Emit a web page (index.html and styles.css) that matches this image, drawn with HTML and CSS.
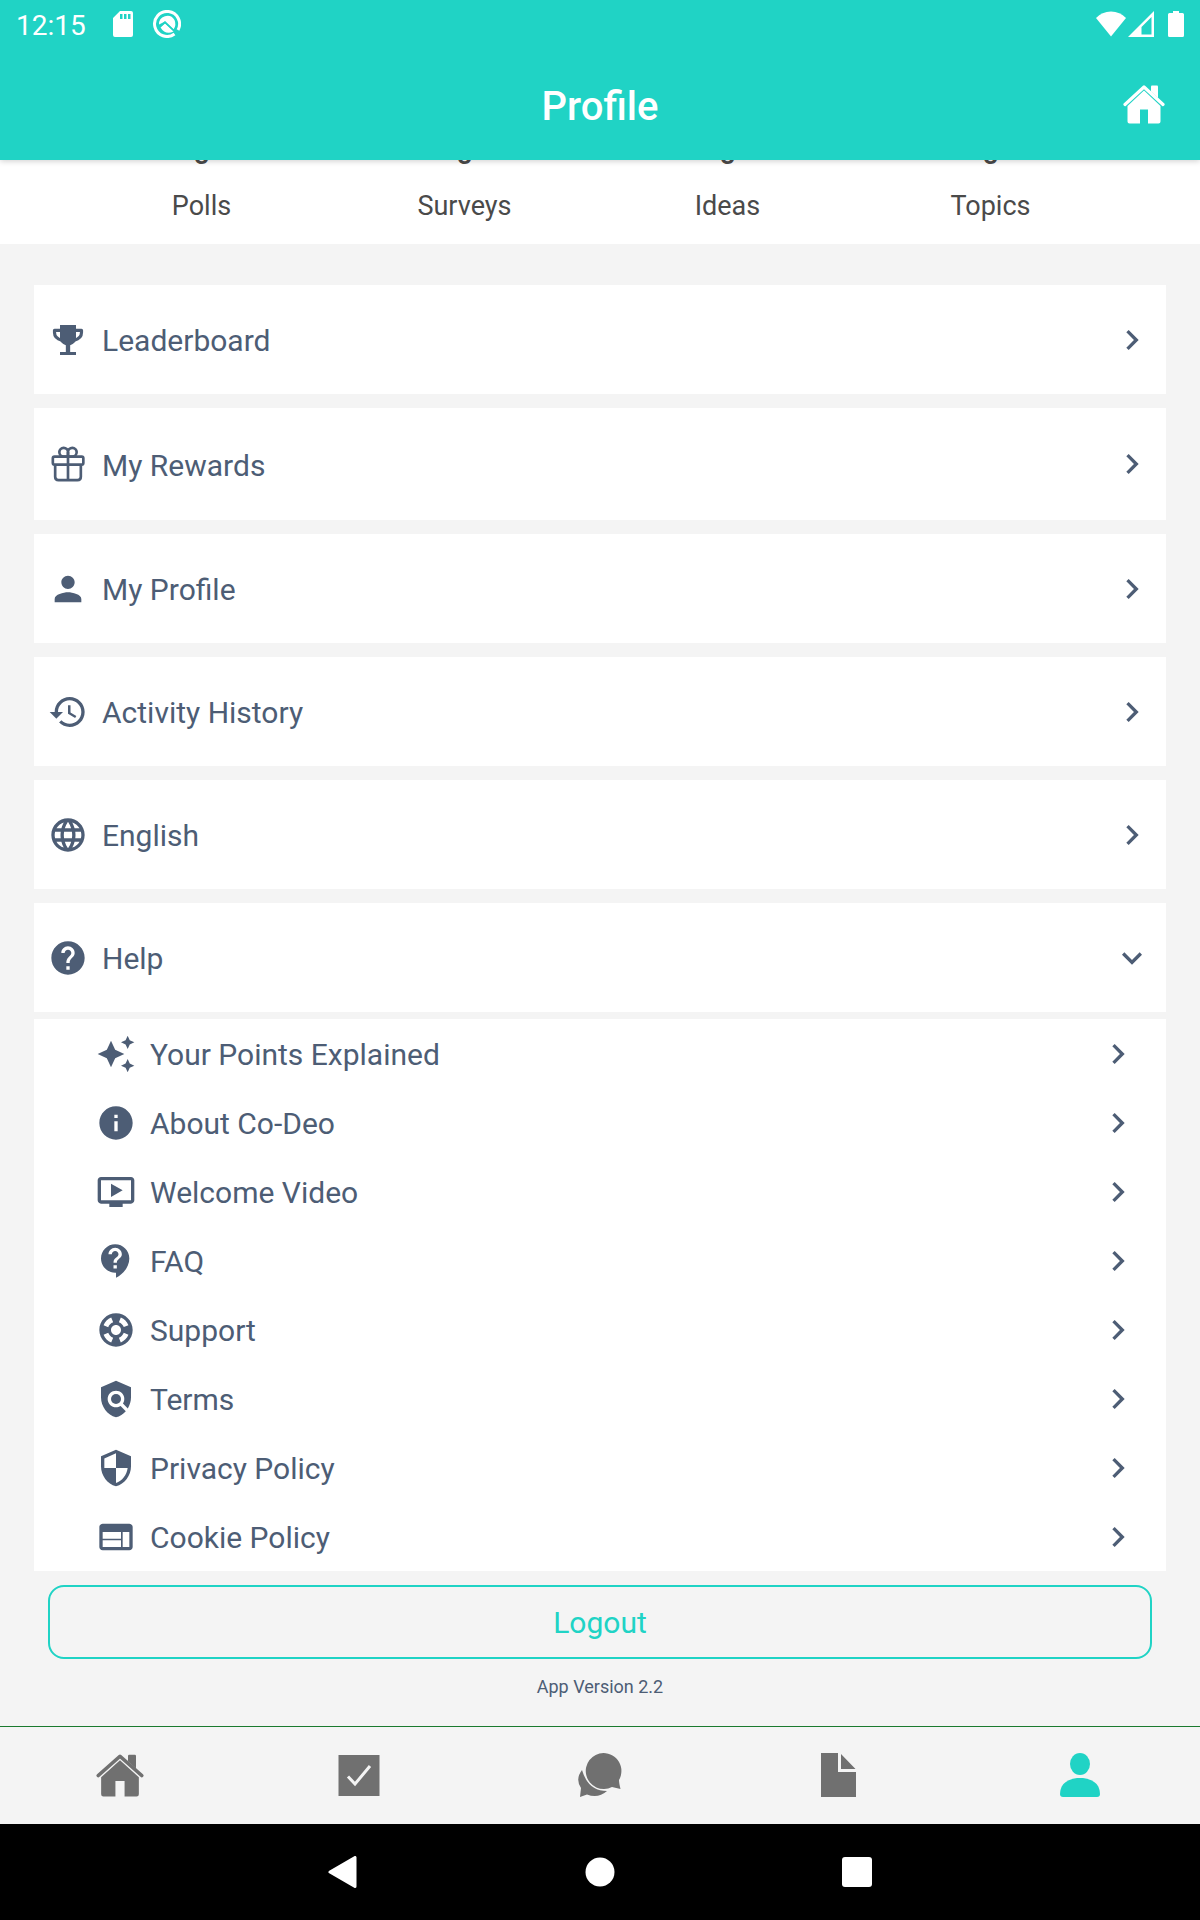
FILE: index.html
```html
<!DOCTYPE html>
<html lang="en">
<head>
    <meta charset="utf-8">
    <meta name="viewport" content="width=device-width, initial-scale=1.0">
    <title>Profile</title>
    <link rel="stylesheet" href="styles.css">
</head>
<body>
    <!-- shared shapes -->
    <svg class="sprite" aria-hidden="true">
        <symbol id="chevron" viewBox="0 0 24 24"><path d="M10 6L8.590 7.410 13.170 12l-4.580 4.590L10 18l6-6z"/></symbol>
        <symbol id="house" viewBox="0 0 42 40">
            <path d="M2 20.500L21 3l19 17.500" fill="none" stroke="currentColor" stroke-width="3.200" stroke-linecap="round" stroke-linejoin="round"/>
            <path d="M28 2.500q0-1 1-1h5q1 0 1 1V14l-7-6.500z"/>
            <path d="M21 6.500L37.500 22v15.500q0 2-2 2H25V25.500h-8v14H6.500q-2 0-2-2V22z"/>
        </symbol>
    </svg>

    <div class="status-bar">
        <span class="time">12:15</span>
        <svg class="sd" viewBox="0 0 20 26"><path fill-rule="evenodd" d="M7 0h11q2 0 2 2v22q0 2-2 2H2q-2 0-2-2V7zM7 3v5h2.500V3zm4 0v5h2.500V3zm4 0v5h2.500V3z"/></svg>
        <svg class="app" viewBox="0 0 28 28">
            <path d="M21.500 24A12.500 12.500 0 1 1 25 20" fill="none" stroke="#fff" stroke-width="3"/>
            <path d="M6 14.500A8.300 8.300 0 0 1 21.500 10q2.200 5-1 9.500L12 11.500z"/>
            <path d="M7.500 17.500L12 13.500l8.500 8q-8 4-13-4z"/>
            <path d="M6.500 17L12 12.200l10 9.300" fill="none" stroke="#20d3c5" stroke-width="1.600"/>
        </svg>
        <div class="signals">
            <svg class="wifi" viewBox="0 0 30 26"><path d="M0 7Q6 .500 15 .500T30 7L15 25.500z"/></svg>
            <svg class="cell" viewBox="0 0 26 26"><path fill-rule="evenodd" d="M26 0v26H0zM23.500 6L13.500 16v7.500h10z"/></svg>
            <svg class="battery" viewBox="0 0 16 26"><path d="M5 0h6v2h3.500Q16 2 16 3.500v21q0 1.500-1.500 1.500h-13Q0 26 0 24.500v-21Q0 2 1.500 2H5z"/></svg>
        </div>
    </div>

    <header>
        <h1>Profile</h1>
        <a class="home-link" href="#" aria-label="Home"><svg viewBox="0 0 42 40"><use href="#house"/></svg></a>
    </header>

    <section class="stats">
        <div class="stat"><b>0</b><span>Polls</span></div>
        <div class="stat"><b>0</b><span>Surveys</span></div>
        <div class="stat"><b>0</b><span>Ideas</span></div>
        <div class="stat"><b>0</b><span>Topics</span></div>
    </section>

    <main>
        <nav class="menu">
            <a class="item" href="#">
                <svg viewBox="0 0 24 24">
                    <path d="M7.200 3h9.600v8q0 3-3.500 4.200v4h3.500V21H7.200v-1.800h3.500v-4Q7.200 14 7.200 11z"/>
                    <path d="M7.500 6.200H3.900v1.300q0 3.500 4.300 4.600M16.500 6.200h3.600v1.300q0 3.500-4.300 4.600" fill="none" stroke="currentColor" stroke-width="1.900" stroke-linejoin="round"/>
                </svg>
                <span>Leaderboard</span>
                <svg class="arrow"><use href="#chevron"/></svg>
            </a>
            <a class="item rewards" href="#">
                <svg viewBox="0 0 24 24">
                    <g fill="none" stroke="currentColor" stroke-width="1.600">
                        <rect x="2.900" y="7.600" width="18.300" height="4.800" rx="1"/>
                        <path d="M4.300 12.400v7.300q0 2 2 2h11.400q2 0 2-2v-7.300M12 4.800v17"/>
                        <path d="M12 7.500H9.300A2.600 2.600 0 1 1 12 4.800zM12 7.500h2.700A2.600 2.600 0 1 0 12 4.800z"/>
                    </g>
                </svg>
                <span>My Rewards</span>
                <svg class="arrow"><use href="#chevron"/></svg>
            </a>
            <a class="item" href="#">
                <svg viewBox="0 0 24 24"><path d="M12 12c2.210 0 4-1.790 4-4s-1.790-4-4-4-4 1.790-4 4 1.790 4 4 4zm0 2c-2.670 0-8 1.340-8 4v2h16v-2c0-2.660-5.330-4-8-4z"/></svg>
                <span>My Profile</span>
                <svg class="arrow"><use href="#chevron"/></svg>
            </a>
            <a class="item" href="#">
                <svg viewBox="0 0 24 24"><path d="M13 3c-4.970 0-9 4.030-9 9H1l3.890 3.890.07.14L9 12H6c0-3.870 3.130-7 7-7s7 3.130 7 7-3.130 7-7 7c-1.930 0-3.680-.79-4.940-2.060l-1.420 1.420C8.270 19.990 10.510 21 13 21c4.970 0 9-4.030 9-9s-4.030-9-9-9zm-1 5v5l4.280 2.540.72-1.210-3.500-2.080V8H12z"/></svg>
                <span>Activity History</span>
                <svg class="arrow"><use href="#chevron"/></svg>
            </a>
            <a class="item" href="#">
                <svg viewBox="0 0 24 24"><path d="M11.990 2C6.470 2 2 6.480 2 12s4.470 10 9.990 10C17.520 22 22 17.520 22 12S17.520 2 11.990 2zm6.930 6h-2.950c-.32-1.250-.78-2.450-1.380-3.560 1.840.63 3.370 1.910 4.330 3.560zM12 4.040c.83 1.200 1.480 2.530 1.910 3.960h-3.820c.43-1.430 1.080-2.760 1.910-3.960zM4.260 14C4.100 13.360 4 12.690 4 12s.1-1.360.26-2h3.380c-.08.66-.14 1.320-.14 2 0 .68.06 1.340.14 2H4.260zm.82 2h2.950c.32 1.250.78 2.450 1.380 3.560-1.840-.63-3.370-1.900-4.330-3.560zm2.950-8H5.080c.96-1.660 2.490-2.930 4.330-3.560C8.810 5.550 8.350 6.750 8.030 8zM12 19.960c-.83-1.200-1.480-2.530-1.910-3.960h3.820c-.43 1.430-1.080 2.760-1.910 3.960zM14.340 14H9.660c-.09-.66-.16-1.320-.16-2 0-.68.07-1.350.16-2h4.680c.09.65.16 1.320.16 2 0 .68-.07 1.340-.16 2zm.25 5.560c.6-1.110 1.060-2.310 1.380-3.560h2.950c-.96 1.650-2.490 2.930-4.330 3.560zM16.360 14c.08-.66.14-1.320.14-2 0-.68-.06-1.340-.14-2h3.380c.16.64.26 1.310.26 2s-.1 1.360-.26 2h-3.380z"/></svg>
                <span>English</span>
                <svg class="arrow"><use href="#chevron"/></svg>
            </a>
            <button class="item" id="helpToggle" type="button" aria-expanded="true" aria-controls="helpMenu">
                <svg viewBox="0 0 24 24"><path d="M12 2C6.480 2 2 6.480 2 12s4.480 10 10 10 10-4.480 10-10S17.520 2 12 2zm1 17h-2v-2h2v2zm2.070-7.750l-.9.920C13.450 12.900 13 13.500 13 15h-2v-.5c0-1.100.45-2.100 1.170-2.830l1.240-1.260c.37-.36.59-.86.59-1.410 0-1.100-.9-2-2-2s-2 .9-2 2H8c0-2.210 1.790-4 4-4s4 1.790 4 4c0 .88-.36 1.680-.93 2.250z"/></svg>
                <span>Help</span>
                <svg class="arrow down"><use href="#chevron"/></svg>
            </button>
        </nav>

        <nav class="submenu" id="helpMenu">
            <a class="sub-item" href="#">
                <svg viewBox="0 0 24 24"><path d="M19 9l1.250-2.750L23 5l-2.750-1.250L19 1l-1.250 2.750L15 5l2.750 1.250L19 9zm-7.500.5L9 4 6.500 9.500 1 12l5.500 2.500L9 20l2.500-5.500L17 12l-5.500-2.500zM19 15l-1.250 2.750L15 19l2.750 1.250L19 23l1.250-2.750L23 19l-2.750-1.250L19 15z"/></svg>
                <span>Your Points Explained</span>
                <svg class="arrow"><use href="#chevron"/></svg>
            </a>
            <a class="sub-item" href="#">
                <svg viewBox="0 0 24 24"><path d="M12 2C6.480 2 2 6.480 2 12s4.480 10 10 10 10-4.480 10-10S17.520 2 12 2zm1 15h-2v-6h2v6zm0-8h-2V7h2v2z"/></svg>
                <span>About Co-Deo</span>
                <svg class="arrow"><use href="#chevron"/></svg>
            </a>
            <a class="sub-item" href="#">
                <svg viewBox="0 0 24 24"><path d="M21 3H3c-1.110 0-2 .89-2 2v12c0 1.100.89 2 2 2h5v2h8v-2h5c1.100 0 1.990-.9 1.990-2L23 5c0-1.110-.9-2-2-2zm0 14H3V5h18v12zm-5-6l-7 4V7z"/></svg>
                <span>Welcome Video</span>
                <svg class="arrow"><use href="#chevron"/></svg>
            </a>
            <a class="sub-item" href="#">
                <svg viewBox="0 0 24 24"><path d="M11.500 2C6.810 2 3 5.810 3 10.500S6.810 19 11.500 19h.5v3c4.860-2.340 8-7 8-11.500C20 5.810 16.190 2 11.500 2zm1 14.500h-2v-2h2v2zm0-3.500h-2c0-3.250 3-3 3-5 0-1.100-.9-2-2-2s-2 .9-2 2h-2c0-2.210 1.790-4 4-4s4 1.790 4 4c0 2.500-3 2.750-3 5z"/></svg>
                <span>FAQ</span>
                <svg class="arrow"><use href="#chevron"/></svg>
            </a>
            <a class="sub-item" href="#">
                <svg viewBox="0 0 24 24"><path d="M12 2C6.480 2 2 6.480 2 12c0 5.520 4.480 10 10 10s10-4.480 10-10c0-5.520-4.480-10-10-10zm7.460 7.120l-2.780 1.150c-.51-1.360-1.580-2.440-2.950-2.940l1.150-2.780c2.100.8 3.770 2.470 4.580 4.570zM12 15c-1.660 0-3-1.340-3-3s1.340-3 3-3 3 1.340 3 3-1.340 3-3 3zM9.130 4.540l1.170 2.780c-1.380.5-2.470 1.590-2.980 2.970L4.540 9.130c.81-2.110 2.480-3.780 4.590-4.590zM4.540 14.870l2.780-1.150c.51 1.380 1.590 2.460 2.970 2.960l-1.170 2.780c-2.100-.81-3.770-2.480-4.580-4.590zm10.340 4.590l-1.150-2.780c1.370-.51 2.450-1.590 2.950-2.970l2.780 1.170c-.81 2.100-2.480 3.770-4.580 4.580z"/></svg>
                <span>Support</span>
                <svg class="arrow"><use href="#chevron"/></svg>
            </a>
            <a class="sub-item" href="#">
                <svg viewBox="0 0 24 24"><path d="M21 5l-9-4-9 4v6c0 5.550 3.840 10.740 9 12 2.300-.56 4.330-1.900 5.880-3.710l-3.120-3.120c-1.940 1.290-4.580 1.070-6.290-.64-1.950-1.950-1.950-5.120 0-7.070 1.950-1.950 5.120-1.950 7.070 0 1.710 1.710 1.920 4.350.64 6.290l2.900 2.900C20.290 15.690 21 13.380 21 11V5z"/><circle cx="12" cy="12" r="3"/></svg>
                <span>Terms</span>
                <svg class="arrow"><use href="#chevron"/></svg>
            </a>
            <a class="sub-item" href="#">
                <svg viewBox="0 0 24 24"><path d="M12 1L3 5v6c0 5.550 3.840 10.740 9 12 5.160-1.260 9-6.450 9-12V5l-9-4zm0 10.990h7c-.53 4.120-3.280 7.790-7 8.940V12H5V6.300l7-3.110v8.800z"/></svg>
                <span>Privacy Policy</span>
                <svg class="arrow"><use href="#chevron"/></svg>
            </a>
            <a class="sub-item" href="#">
                <svg viewBox="0 0 24 24"><path d="M20 4H4c-1.100 0-1.990.9-1.990 2L2 18c0 1.100.9 2 2 2h16c1.100 0 2-.9 2-2V6c0-1.100-.9-2-2-2zm-5 14H4v-4h11v4zm0-5H4V9h11v4zm5 5h-4V9h4v9z"/></svg>
                <span>Cookie Policy</span>
                <svg class="arrow"><use href="#chevron"/></svg>
            </a>
        </nav>

        <button class="logout" type="button">Logout</button>
        <p class="version">App Version 2.2</p>
    </main>

    <footer>
        <nav class="tabs">
            <a href="#" aria-label="Home"><svg viewBox="0 0 42 40" preserveAspectRatio="none"><use href="#house"/></svg></a>
            <a href="#" aria-label="Surveys"><svg viewBox="0 0 48 44"><path d="M2.500 2h41v41h-41z"/><path d="M12 23.500l7 7.500 15-18" fill="none" stroke="#f4f4f4" stroke-width="3"/></svg></a>
            <a href="#" aria-label="Chat"><svg viewBox="0 0 48 44">
                <path d="M6 17Q-1 26 5 35L4 44l7-2.500Q22 46 31 38 12 38 6 17z"/>
                <path d="M27.500 0a18 18 0 0 1 15.500 27q0 3 1.500 9l-8.500-2A18 18 0 1 1 27.500 0z"/>
            </svg></a>
            <a href="#" aria-label="Documents"><svg viewBox="0 0 48 44"><path d="M5 0h17v19h18v25H5zM25 1l14.500 15H25z"/></svg></a>
            <a class="active" href="#" aria-label="Profile"><svg viewBox="0 0 48 44"><ellipse cx="24" cy="11" rx="10" ry="11"/><path d="M4 41C4 30 13 25 24 25s20 5 20 16q0 3-3 3H7q-3 0-3-3z"/></svg></a>
        </nav>
        <div class="system-nav">
            <button type="button" aria-label="Back"><svg viewBox="0 0 32 32"><path d="M28 1.500v29L3 16z" stroke="#fff" stroke-width="3" stroke-linejoin="round"/></svg></button>
            <button type="button" aria-label="Home"><svg viewBox="0 0 32 32"><circle cx="16" cy="16" r="14.500"/></svg></button>
            <button type="button" aria-label="Recent apps"><svg viewBox="0 0 32 32"><rect x="1" y="1" width="30" height="30" rx="3"/></svg></button>
        </div>
    </footer>

    <script>
        const helpToggle = document.getElementById('helpToggle');
        const helpMenu = document.getElementById('helpMenu');

        helpToggle.addEventListener('click', () => {
            helpMenu.hidden = !helpMenu.hidden;
            helpToggle.setAttribute('aria-expanded', String(!helpMenu.hidden));
        });
    </script>
</body>
</html>
```
FILE: styles.css
```css
*{
    box-sizing: border-box;
}
body{
    margin: 0;
    min-height: 100vh;
    display: flex;
    flex-direction: column;
    background-color: #f4f4f4;
    color: #4d5d75;
    font-family: Roboto, "Open Sans", sans-serif;
}
a{
    color: inherit;
    text-decoration: none;
}
button{
    border: none;
    background: none;
    font-family: inherit;
    cursor: pointer;
}
svg{
    display: block;
    fill: currentColor;
}
.sprite{
    display: none;
}

/* top bars */
.status-bar{
    position: relative;
    z-index: 2;
    height: 48px;
    padding: 0 16px;
    display: flex;
    align-items: center;
    background-color: #20d3c5;
    color: white;
}
.time{
    width: 97px;
    padding-top: 2px;
    font-size: 28px;
}
.sd{
    width: 20px;
    height: 26px;
}
.app{
    width: 28px;
    height: 28px;
    margin-left: 20px;
}
.signals{
    display: flex;
    margin-left: auto;
}
.wifi{
    width: 30px;
    height: 26px;
}
.cell{
    width: 26px;
    height: 26px;
    margin-left: 2px;
}
.battery{
    width: 16px;
    height: 26px;
    margin-left: 14px;
}
header{
    position: relative;
    z-index: 1;
    height: 112px;
    padding-top: 4px;
    display: flex;
    align-items: center;
    justify-content: center;
    background-color: #20d3c5;
    color: white;
    box-shadow: 0 1px 6px rgba(0, 0, 0, 0.2);
}
h1{
    margin: 0;
    font-size: 40px;
    font-weight: 500;
}
.home-link{
    position: absolute;
    right: 35px;
    top: 36px;
}
.home-link svg{
    width: 42px;
    height: 40px;
}

/* counters, the numbers are scrolled under the header */
.stats{
    height: 84px;
    padding: 0 78px 22px 70px;
    display: flex;
    align-items: flex-end;
    overflow: hidden;
    background-color: white;
    color: #4a4a4a;
}
.stat{
    flex: 1;
    display: flex;
    flex-direction: column;
    align-items: center;
    gap: 20px;
    font-size: 27px;
    line-height: 32px;
}
.stat b{
    font-size: 30px;
    font-weight: 500;
}

/* menu */
main{
    flex: 1;
    padding: 41px 34px 0;
}
.menu{
    display: flex;
    flex-direction: column;
    gap: 14px;
}
.item,
.sub-item{
    width: 100%;
    display: flex;
    align-items: center;
    gap: 14px;
    background-color: white;
    color: #4d5d75;
    font-size: 30px;
    line-height: 35px;
    text-align: left;
}
.item{
    min-height: 109px;
    padding: 0 14px;
}
.rewards{
    min-height: 112px;
}
.item span,
.sub-item span{
    padding-top: 2px;
}
.item svg,
.sub-item svg{
    width: 40px;
    height: 40px;
    flex-shrink: 0;
}
.item .arrow,
.sub-item .arrow{
    margin-left: auto;
}
.down{
    transform: rotate(90deg);
}
.submenu{
    margin-top: 7px;
}
.sub-item{
    height: 69px;
    padding: 0 28px 0 62px;
}
.logout{
    display: block;
    width: calc(100% - 28px);
    height: 74px;
    margin: 14px auto 0;
    padding-top: 2px;
    border: 2px solid #20d3c5;
    border-radius: 16px;
    color: #20d3c5;
    font-size: 30px;
}
.version{
    margin: 17px 0 28px;
    text-align: center;
    font-size: 18px;
    line-height: 22px;
}

/* bottom bars */
.tabs{
    height: 98px;
    padding-bottom: 2px;
    display: flex;
    align-items: center;
    border-top: 1px solid #1a7a2e;
    color: #707070;
}
.tabs a{
    flex: 1;
}
.tabs svg{
    width: 48px;
    height: 44px;
    margin: 0 auto;
}
.tabs .active{
    color: #20d3c5;
}
.system-nav{
    height: 96px;
    display: flex;
    align-items: center;
    justify-content: center;
    background-color: black;
}
.system-nav button{
    width: 257px;
    padding: 0;
    color: white;
}
.system-nav svg{
    width: 32px;
    height: 32px;
    margin: 0 auto;
}
```
